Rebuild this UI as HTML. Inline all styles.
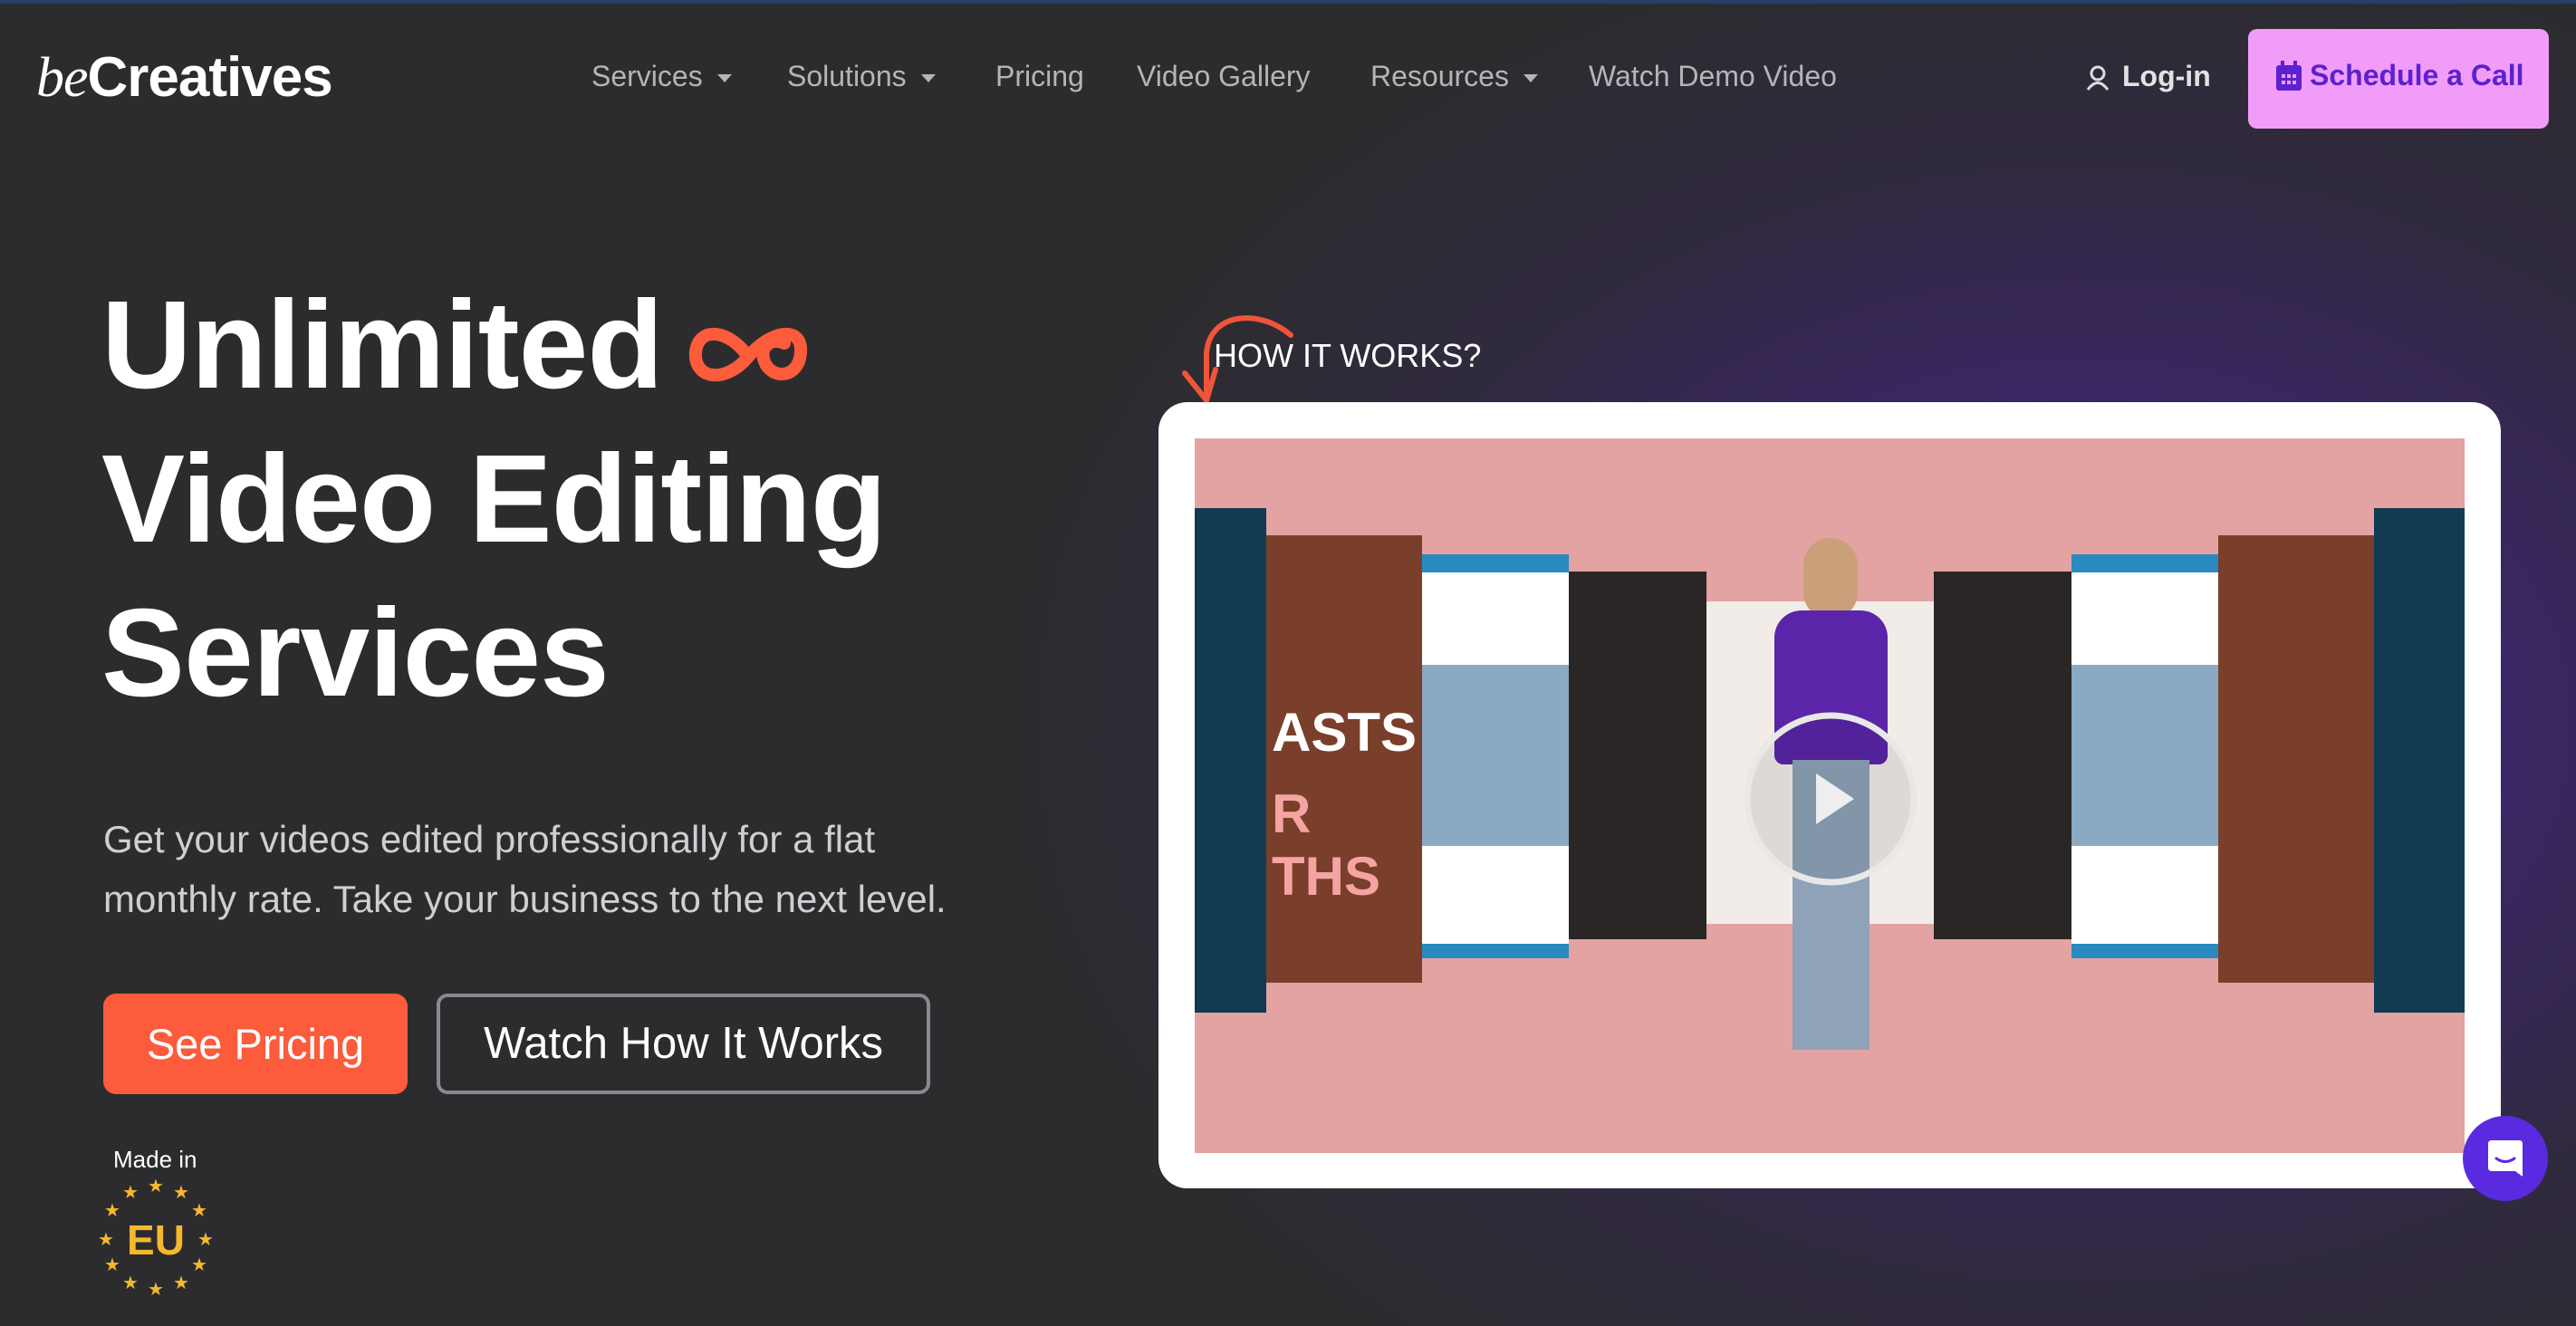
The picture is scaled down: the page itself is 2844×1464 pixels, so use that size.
<!DOCTYPE html>
<html><head><meta charset="utf-8"><style>
*{margin:0;padding:0;box-sizing:border-box}
html,body{width:2844px;height:1464px;overflow:hidden}
body{position:relative;font-family:"Liberation Sans",sans-serif;background:#2c2c2e;
background-image:radial-gradient(ellipse 1200px 900px at 2300px 800px,#4a2785 0%,#3c2669 35%,#302a3e 70%,rgba(44,44,46,0) 100%);}
.a{position:absolute;white-space:nowrap}
.nav{font-size:32px;color:#b5b5b8;top:66px}
.car{display:inline-block;width:0;height:0;border-left:8px solid transparent;border-right:8px solid transparent;border-top:9px solid #b5b5b8;margin-left:16px;vertical-align:middle}
h1{position:absolute;left:112px;top:296px;font-size:138px;line-height:170px;color:#fff;font-weight:bold;letter-spacing:-1px}
.p{left:114px;top:894px;font-size:42px;line-height:66px;color:#cfcfd2}
.btn1{left:114px;top:1097px;width:336px;height:111px;background:#fc5b3c;border-radius:14px;color:#fff;font-size:47px;text-align:center;line-height:111px}
.btn2{left:482px;top:1097px;width:545px;height:111px;border:4px solid #8a8a8e;border-radius:12px;color:#fff;font-size:49px;text-align:center;line-height:103px}
.card{left:1279px;top:444px;width:1482px;height:868px;background:#fff;border-radius:32px}
.vid{left:1319px;top:484px;width:1402px;height:789px;background:#e3a3a3;overflow:hidden}
.pn{position:absolute}
</style></head><body>
<div class="a" style="left:0;top:0;width:2844px;height:4px;background:#24416a"></div>
<div class="a" style="left:40px;top:50px;font-size:62px;color:#fff;letter-spacing:-1px;font-weight:bold"><span style="font-family:'Liberation Serif',serif;font-style:italic;font-weight:normal">be</span>Creatives</div>
<div class="a nav" style="left:653px">Services<span class="car"></span></div>
<div class="a nav" style="left:869px">Solutions<span class="car"></span></div>
<div class="a nav" style="left:1099px">Pricing</div>
<div class="a nav" style="left:1255px">Video Gallery</div>
<div class="a nav" style="left:1513px">Resources<span class="car"></span></div>
<div class="a nav" style="left:1754px">Watch Demo Video</div>
<svg class="a" style="left:2303px;top:72px" width="26" height="28" viewBox="0 0 26 28"><circle cx="13" cy="9" r="7" fill="none" stroke="#ddd" stroke-width="3"/><path d="M2 27 Q13 12 24 27" fill="none" stroke="#ddd" stroke-width="3"/></svg>
<div class="a" style="left:2343px;top:66px;font-size:32px;color:#e2e2e2;font-weight:bold">Log-in</div>
<div class="a" style="left:2482px;top:32px;width:332px;height:110px;background:#f29cf9;border-radius:10px"></div>
<svg class="a" style="left:2512px;top:67px" width="30" height="34" viewBox="0 0 30 34"><rect x="1" y="5" width="28" height="28" rx="3" fill="#5b21d0"/><rect x="6" y="0" width="4" height="8" fill="#5b21d0"/><rect x="20" y="0" width="4" height="8" fill="#5b21d0"/><g fill="#f29cf9"><rect x="7" y="15" width="4" height="4"/><rect x="13" y="15" width="4" height="4"/><rect x="19" y="15" width="4" height="4"/><rect x="7" y="22" width="4" height="4"/><rect x="13" y="22" width="4" height="4"/><rect x="19" y="22" width="4" height="4"/></g></svg>
<div class="a" style="left:2550px;top:65px;font-size:32px;color:#5b21d0;font-weight:bold">Schedule a Call</div>

<h1>Unlimited<svg style="margin-left:24px;vertical-align:-6px" width="140" height="80" viewBox="0 0 140 80"><path d="M70 40 C50 10 15 5 12 35 C10 65 45 70 70 40 C95 10 130 5 128 35 C126 65 95 65 88 45 C82 30 95 18 110 25" fill="none" stroke="#fc5b3c" stroke-width="14" stroke-linecap="round"/></svg><br>Video Editing<br>Services</h1>
<div class="a p">Get your videos edited professionally for a flat<br>monthly rate. Take your business to the next level.</div>
<div class="a btn1">See Pricing</div>
<div class="a btn2">Watch How It Works</div>
<div class="a" style="left:125px;top:1265px;font-size:26px;color:#fff">Made in</div>
<svg class="a" style="left:100px;top:1296px" width="144" height="144" viewBox="-72 -72 144 144">
<g fill="#f5b82e" font-size="20" text-anchor="middle" font-family="DejaVu Sans,sans-serif">
<text x="0" y="-52">★</text><text x="28" y="-45">★</text><text x="48" y="-25">★</text><text x="55" y="7">★</text><text x="48" y="35">★</text><text x="28" y="55">★</text><text x="0" y="62">★</text><text x="-28" y="55">★</text><text x="-48" y="35">★</text><text x="-55" y="7">★</text><text x="-48" y="-25">★</text><text x="-28" y="-45">★</text>
<text x="0" y="17" font-size="46" font-weight="bold" font-family="Liberation Sans,sans-serif">EU</text></g></svg>

<svg class="a" style="left:1280px;top:340px" width="150" height="110" viewBox="0 0 150 110"><path d="M145 30 C110 0 55 5 52 50 L52 100" fill="none" stroke="#f0553a" stroke-width="6" stroke-linecap="round"/><path d="M28 72 L52 102 L62 68" fill="none" stroke="#f0553a" stroke-width="6" stroke-linecap="round"/></svg>
<div class="a" style="left:1340px;top:372px;font-size:36px;color:#fff">HOW IT WORKS?</div>

<div class="a card"></div>
<div class="a vid">
<div class="pn" style="left:0;top:77px;width:79px;height:557px;background:#123a52"></div>
<div class="pn" style="left:79px;top:107px;width:172px;height:494px;background:#7a3f2a"></div>
<div class="pn" style="left:85px;top:290px;color:#fff;font-size:60px;font-weight:bold">ASTS</div>
<div class="pn" style="left:85px;top:380px;color:#f5a4a4;font-size:60px;font-weight:bold">R<br>THS</div>
<div class="pn" style="left:251px;top:128px;width:162px;height:446px;background:#fff;border-top:20px solid #2a8ac0;border-bottom:16px solid #2a8ac0"></div>
<div class="pn" style="left:251px;top:250px;width:162px;height:200px;background:#8aa9c4"></div>
<div class="pn" style="left:413px;top:147px;width:152px;height:406px;background:#2a2626"></div>
<div class="pn" style="left:565px;top:180px;width:251px;height:356px;background:#f2ece8"></div>
<div class="pn" style="left:816px;top:147px;width:152px;height:406px;background:#2a2626"></div>
<div class="pn" style="left:968px;top:128px;width:162px;height:446px;background:#fff;border-top:20px solid #2a8ac0;border-bottom:16px solid #2a8ac0"></div>
<div class="pn" style="left:968px;top:250px;width:162px;height:200px;background:#8aa9c4"></div>
<div class="pn" style="left:1130px;top:107px;width:172px;height:494px;background:#7a3f2a"></div>
<div class="pn" style="left:1302px;top:77px;width:100px;height:557px;background:#123a52"></div>
<div class="pn" style="left:672px;top:110px;width:60px;height:90px;border-radius:30px;background:#c9a07a"></div>
<div class="pn" style="left:640px;top:190px;width:125px;height:170px;border-radius:30px 30px 10px 10px;background:#5a25a8"></div>
<div class="pn" style="left:660px;top:355px;width:85px;height:320px;background:#8fa2b8"></div>
<svg class="pn" style="left:604px;top:300px" width="196" height="196" viewBox="0 0 196 196"><circle cx="98" cy="98" r="92" fill="rgba(0,0,0,0.08)" stroke="#e8e8e8" stroke-width="7"/><path d="M82 70 L124 98 L82 126 Z" fill="#eee"/></svg>
</div>
<div class="a" style="left:2719px;top:1232px;width:94px;height:94px;border-radius:50%;background:#5a2ae0"></div>
<svg class="a" style="left:2745px;top:1257px" width="42" height="44" viewBox="0 0 42 44"><path d="M6 2 H36 Q40 2 40 6 V42 L32 36 H6 Q2 36 2 32 V6 Q2 2 6 2Z" fill="#fff"/><path d="M11 22 Q21 29 31 22" fill="none" stroke="#5a2ae0" stroke-width="3" stroke-linecap="round"/></svg>
</body></html>
